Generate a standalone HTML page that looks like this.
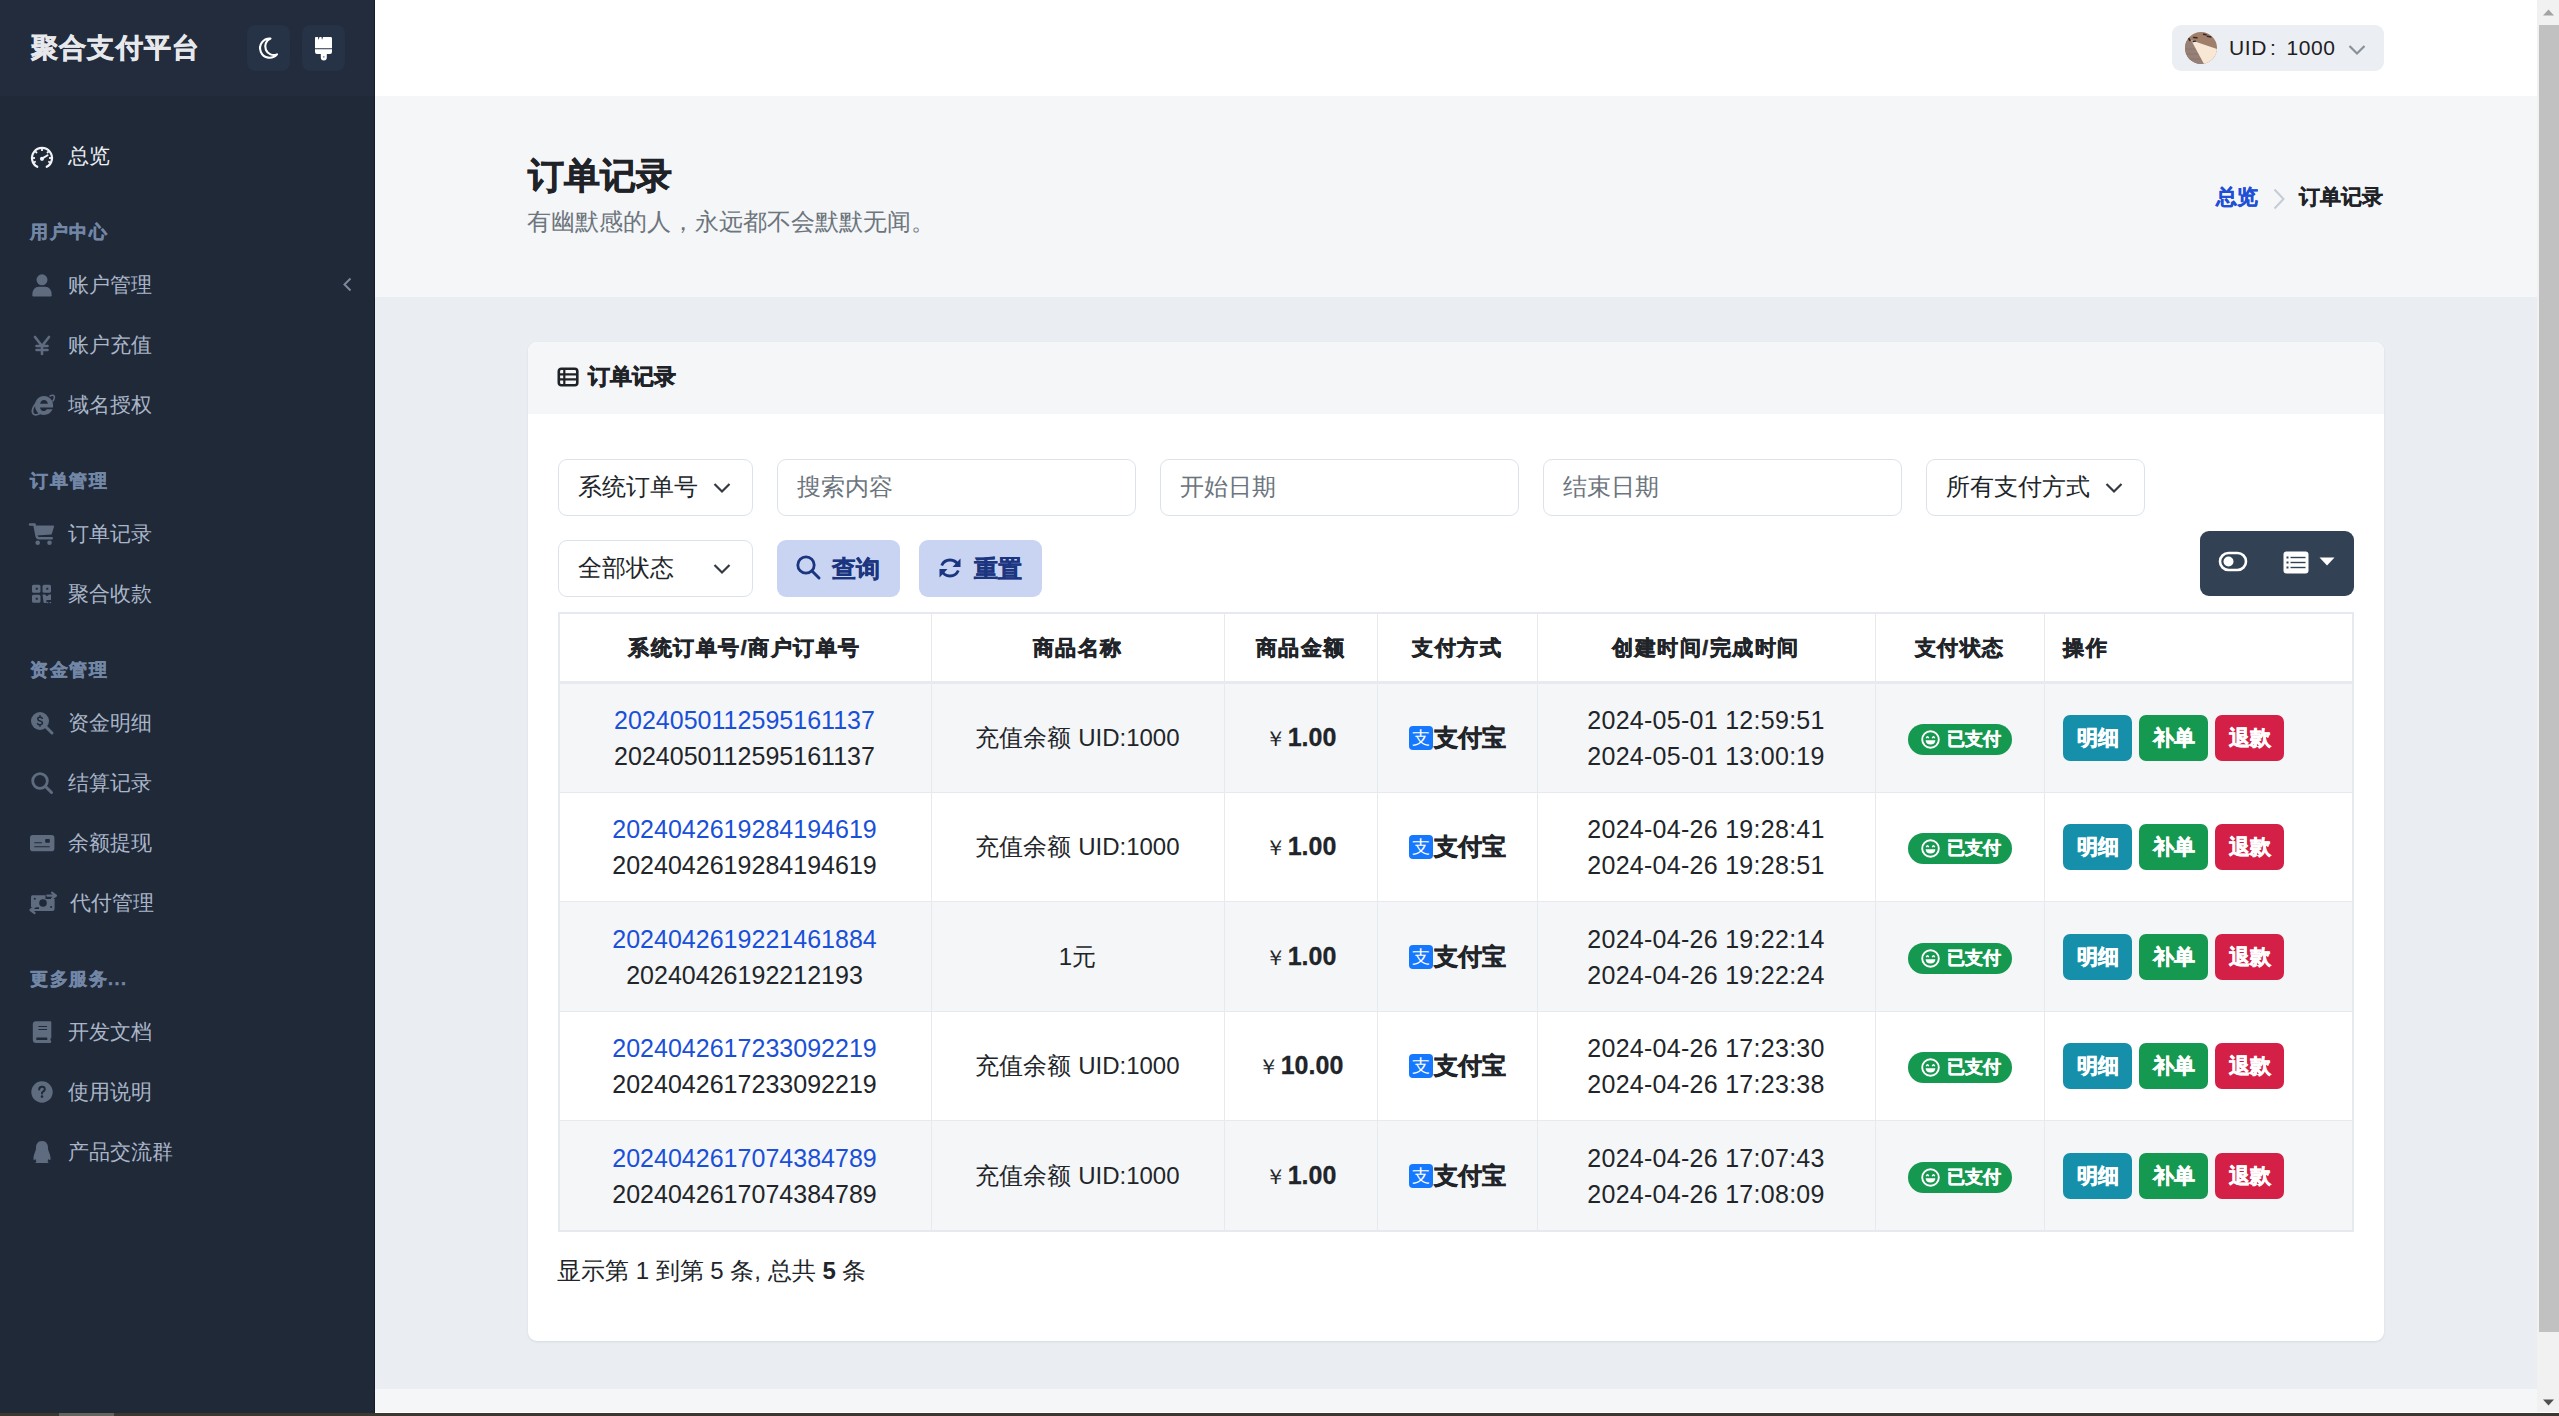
<!DOCTYPE html>
<html><head><meta charset="utf-8">
<style>
*{box-sizing:border-box;margin:0;padding:0}
html,body{width:2559px;height:1416px;overflow:hidden}
body{font-family:"Liberation Sans",sans-serif;color:#212529;background:#eaedf1;position:relative;font-size:24px}
.abs{position:absolute}
svg.abs{overflow:visible}
.b{-webkit-text-stroke:0.5px currentColor}
/* sidebar */
#sb{left:0;top:0;width:375px;height:1413px;background:#1f2938}
#sbh{left:0;top:0;width:375px;height:96px;background:#222c3d}
#sbedge{left:374px;top:0;width:1px;height:1413px;background:#151c28}
.brand{left:31px;top:28px;font-size:27px;font-weight:bold;color:#e6e8ec;letter-spacing:1.2px;line-height:40px;-webkit-text-stroke:0.6px #e6e8ec}
.hbtn{top:25px;width:43px;height:46px;border-radius:8px;background:#263245}
.nav{left:0;top:126px;width:375px}
.ni{height:60px;display:flex;align-items:center;padding-left:68px;color:#aab5c8;font-size:21px;position:relative;line-height:30px}
.ni.act{color:#eef0f3}
.nh{padding:33px 30px 9px;height:69px;line-height:27px;font-size:18px;font-weight:bold;letter-spacing:1.5px;color:#7286a5;-webkit-text-stroke:0.4px #7286a5}
.ico{fill:#5f6b7f}
/* header */
#hdr{left:375px;top:0;width:2162px;height:96px;background:#fff}
#hero{left:375px;top:96px;width:2162px;height:201px;background:#f5f6f8}
#foot{left:375px;top:1389px;width:2162px;height:23px;background:#f5f6f8}
#wl{left:375px;top:1412px;width:2184px;height:1px;background:#fff}
#task{left:0;top:1413px;width:2559px;height:3px;background:#3c3830}
#thumbh{left:59px;top:1413px;width:55px;height:3px;background:#66635c}
#scr{left:2537px;top:0;width:22px;height:1412px;background:#f1f1f1}
#scrth{left:2539px;top:25px;width:20px;height:1307px;background:#c1c1c1}
#card{left:528px;top:342px;width:1856px;height:999px;background:#fff;border-radius:9px;box-shadow:0 1px 2px rgba(200,206,215,.6)}
#cardh{left:528px;top:342px;width:1856px;height:72px;background:#f5f6f8;border-radius:9px 9px 0 0}
.inp{height:57px;border:1.5px solid #dde2ea;border-radius:9px;background:#fff;font-size:24px;line-height:54px;padding-left:19px;color:#212529}
.ph{color:#6c757d}
.btnq{top:540px;height:57px;border-radius:9px;background:#c8d4f2;color:#1b3580;font-size:24px;font-weight:bold;line-height:57px;-webkit-text-stroke:0.4px #1b3580}
.tl{background:#e6e9ee}
.cell{display:flex;flex-direction:column;align-items:center;justify-content:center;text-align:center;font-size:24px;line-height:36px;color:#212529}
.th{font-size:21px;font-weight:bold;letter-spacing:1.5px;color:#212529;-webkit-text-stroke:0.6px #212529;line-height:30px}
.lnk{color:#1a50d8}
.amt{font-weight:bold}
.badge{height:31px;border-radius:16px;background:#15984f;color:#fff;font-size:18px;font-weight:bold;line-height:31px;-webkit-text-stroke:0.5px #fff}
.ab{width:69px;height:46px;border-radius:7px;color:#fff;font-size:21px;font-weight:bold;line-height:46px;text-align:center;-webkit-text-stroke:0.6px #fff}
.num{font-size:25px;letter-spacing:0.02px}
.dt{font-size:25px;letter-spacing:0.28px}
.amtw{display:flex;align-items:baseline}
.yen{font-size:21px;margin-right:2px}
.amt{font-weight:bold;font-size:25px;-webkit-text-stroke:0.3px #212529}
.ali{font-weight:bold;-webkit-text-stroke:0.6px #212529}
</style></head>
<body>
<div id="sb" class="abs"></div>
<div id="sbh" class="abs"></div>
<div id="sbedge" class="abs"></div>
<div class="abs brand">聚合支付平台</div>
<div class="abs hbtn" style="left:247px"></div>
<div class="abs hbtn" style="left:302px"></div>
<!-- moon -->
<svg class="abs" style="left:259px;top:38px" width="19" height="20" viewBox="0 0 19 20"><path d="M11.5 0.6 A9.6 9.6 0 1 0 18 16.4 A7.6 7.6 0 0 1 11.5 0.6 Z" fill="none" stroke="#fff" stroke-width="2.1" stroke-linejoin="round"/></svg>
<!-- brush -->
<svg class="abs" style="left:314px;top:37px" width="19" height="23" viewBox="0 0 19 23"><path d="M1.5 0 L4 0 L4.5 3 L5.5 0 L7.5 0 L8 3 L9 0 L17 0 Q18 0 18 1.5 L18 11.3 L1 11.3 L1 1.5 Q1 0 1.5 0 Z" fill="#fff"/><path d="M1 12.2 L18 12.2 L18 15 Q18 17 16 17 L12.8 17 L12.8 20.5 A3 3 0 0 1 6.8 20.5 L6.8 17 L3 17 Q1 17 1 15 Z" fill="#fff"/><circle cx="9.8" cy="19.8" r="0.9" fill="#8a93a3"/></svg>

<div class="abs nav">
 <div class="ni act">总览</div>
 <div class="nh">用户中心</div>
 <div class="ni">账户管理</div>
 <div class="ni">账户充值</div>
 <div class="ni">域名授权</div>
 <div class="nh">订单管理</div>
 <div class="ni">订单记录</div>
 <div class="ni">聚合收款</div>
 <div class="nh">资金管理</div>
 <div class="ni">资金明细</div>
 <div class="ni">结算记录</div>
 <div class="ni">余额提现</div>
 <div class="ni" style="padding-left:70px">代付管理</div>
 <div class="nh">更多服务...</div>
 <div class="ni">开发文档</div>
 <div class="ni">使用说明</div>
 <div class="ni">产品交流群</div>
</div>
<!-- gauge -->
<svg class="abs" style="left:30px;top:146px" width="24" height="24" viewBox="0 0 24 24">
 <path d="M7.3 20.8 A10 10 0 1 1 16.7 20.8" fill="none" stroke="#f2f4f7" stroke-width="2.2" stroke-linecap="round"/>
 <g stroke="#f2f4f7" stroke-width="1.8" stroke-linecap="butt">
  <line x1="12" y1="2.5" x2="12" y2="5"/><line x1="5.3" y1="5.3" x2="7" y2="7"/><line x1="18.7" y1="5.3" x2="17" y2="7"/>
  <line x1="2.5" y1="12" x2="5" y2="12"/><line x1="21.5" y1="12" x2="19" y2="12"/>
  <line x1="3.6" y1="16.5" x2="5.8" y2="15.5"/><line x1="20.4" y1="16.5" x2="18.2" y2="15.5"/>
 </g>
 <line x1="12" y1="12.6" x2="17.6" y2="9.2" stroke="#f2f4f7" stroke-width="1.9" stroke-linecap="round"/>
 <circle cx="12" cy="12.8" r="2.1" fill="#f2f4f7"/>
</svg>
<!-- user -->
<svg class="abs ico" style="left:30px;top:273px" width="24" height="24" viewBox="0 0 24 24"><circle cx="12" cy="6.8" r="5.5"/><path d="M2.3 22.5 Q2.3 13.8 9 13.8 L15 13.8 Q21.7 13.8 21.7 22.5 Q21.7 23.5 20.7 23.5 L3.3 23.5 Q2.3 23.5 2.3 22.5Z"/></svg>
<!-- chevron left -->
<svg class="abs" style="left:342px;top:277px" width="11" height="15" viewBox="0 0 11 15"><path d="M8.5 1.5 L2.5 7.5 L8.5 13.5" fill="none" stroke="#7d889b" stroke-width="2"/></svg>
<!-- yen -->
<svg class="abs" style="left:30px;top:333px" width="24" height="24" viewBox="0 0 24 24"><path d="M5 4 L12 13 L19 4 M12 13 L12 21 M6.5 13 L17.5 13 M6.5 17 L17.5 17" fill="none" stroke="#5f6b7f" stroke-width="2.6" stroke-linecap="round" stroke-linejoin="round"/></svg>
<!-- IE -->
<svg class="abs ico" style="left:30px;top:393px" width="24" height="24" viewBox="0 0 24 24">
 <path d="M14 3 C8.5 3 5 7.3 5 12.5 C5 17.8 8.7 22 14 22 C17.8 22 21 19.8 22.5 16.3 L16.8 16.3 C16.1 17.4 15.1 18.1 14 18.1 C11.9 18.1 10.3 16.6 10 14.4 L23 14.4 C23.1 13.8 23.1 13.2 23.1 12.5 C23.1 7.3 19.5 3 14 3 Z M10.1 10.8 C10.5 8.6 12 7.1 14 7.1 C16 7.1 17.5 8.6 17.9 10.8 Z"/>
 <path d="M19.5 3.4 C21.8 1.8 23.8 1.9 24.3 3.2 C24.8 4.6 24 6.5 22.6 8.5" fill="none" stroke="#5f6b7f" stroke-width="1.5"/>
 <path d="M7 9 C3.5 13 1.8 17 2.6 19.8 C3.3 22.2 6.3 22.5 10 20.5" fill="none" stroke="#5f6b7f" stroke-width="1.8"/>
</svg>
<!-- cart -->
<svg class="abs ico" style="left:29px;top:522px" width="26" height="24" viewBox="0 0 26 24">
 <path d="M1 2.5 L5.5 2.5" stroke="#5f6b7f" stroke-width="2.4" stroke-linecap="round"/>
 <path d="M5.5 3.5 L24.5 3.5 Q25.3 3.8 25 4.8 L22.6 12.4 L7.2 13.5 Z"/>
 <path d="M5.5 3 L7.6 14 Q8.2 16.3 10 16.3 L22.7 16.3" fill="none" stroke="#5f6b7f" stroke-width="2.5" stroke-linecap="round"/>
 <circle cx="8.7" cy="20.7" r="2.3"/><circle cx="20.5" cy="20.7" r="2.3"/>
</svg>
<!-- qrcode -->
<svg class="abs ico" style="left:32px;top:584px" width="20" height="20" viewBox="0 0 20 20">
 <path fill-rule="evenodd" d="M1.5 0.8 h5.5 q1.5 0 1.5 1.5 v5 q0 1.5 -1.5 1.5 h-5.5 q-1.5 0 -1.5 -1.5 v-5 q0 -1.5 1.5 -1.5 Z M3.8 3.8 v2 h2 v-2 Z"/>
 <path fill-rule="evenodd" d="M12 0.8 h5.5 q1.5 0 1.5 1.5 v5 q0 1.5 -1.5 1.5 h-5.5 q-1.5 0 -1.5 -1.5 v-5 q0 -1.5 1.5 -1.5 Z M14.3 3.8 v2 h2 v-2 Z"/>
 <path fill-rule="evenodd" d="M1.5 10.8 h5.5 q1.5 0 1.5 1.5 v5 q0 1.5 -1.5 1.5 h-5.5 q-1.5 0 -1.5 -1.5 v-5 q0 -1.5 1.5 -1.5 Z M3.8 13.8 v2 h2 v-2 Z"/>
 <path d="M10.5 10.5 h2.5 l2 1.8 l2 -1.8 h2 v5.5 h-4.5 v3 h-2 q-1 0 -1 -1 Z"/><rect x="14.8" y="18" width="1.5" height="1.2"/><rect x="17.6" y="18" width="1.5" height="1.2"/>
</svg>
<!-- search dollar -->
<svg class="abs ico" style="left:30px;top:711px" width="24" height="24" viewBox="0 0 24 24">
 <circle cx="10" cy="10" r="9"/><path d="M16 16 L22 22" stroke="#5f6b7f" stroke-width="3" stroke-linecap="round"/>
 <path d="M12.3 7.3 Q11.8 6.3 10 6.3 Q7.8 6.3 7.8 8 Q7.8 9.5 10 9.9 Q12.4 10.4 12.4 12 Q12.4 13.7 10 13.7 Q8 13.7 7.5 12.6 M10 4.8 V6.3 M10 13.7 V15.2" fill="none" stroke="#1f2938" stroke-width="1.5" stroke-linecap="round"/>
</svg>
<!-- search -->
<svg class="abs" style="left:30px;top:771px" width="24" height="24" viewBox="0 0 24 24">
 <circle cx="10" cy="10" r="7.3" fill="none" stroke="#5f6b7f" stroke-width="2.8"/><path d="M15.5 15.5 L21.5 21.5" stroke="#5f6b7f" stroke-width="3" stroke-linecap="round"/>
</svg>
<!-- money check -->
<svg class="abs ico" style="left:29px;top:834px" width="26" height="18" viewBox="0 0 26 18">
 <rect x="1" y="1" width="24.4" height="16.2" rx="2.8"/>
 <g fill="#1f2938"><rect x="5.2" y="8.2" width="7.8" height="1.1" rx=".5"/><rect x="5.2" y="12.2" width="15.6" height="1.1" rx=".5"/><rect x="16.2" y="5" width="4.6" height="3.8" rx=".8"/></g>
</svg>
<!-- money bill transfer -->
<svg class="abs ico" style="left:29px;top:891px" width="29" height="24" viewBox="0 0 29 24">
 <path d="M3.5 4.3 L17 4.3 L17 8 L25.6 8 L25.6 17.8 Q25.6 20 23.5 20 L10 20 L10 16.3 L2 16.3 L2 6 Q2 4.3 3.5 4.3 Z"/>
 <path d="M18 4.6 L26 4.6 M23 1.6 L27 4.6 L23 7.6" fill="none" stroke="#5f6b7f" stroke-width="2.2" stroke-linecap="round" stroke-linejoin="round"/>
 <path d="M11 19 L2.5 19 M5.5 16 L1.5 19 L5.5 22" fill="none" stroke="#5f6b7f" stroke-width="2.2" stroke-linecap="round" stroke-linejoin="round"/>
 <circle cx="14" cy="12" r="3.8" fill="#1f2938"/><circle cx="5.8" cy="7.8" r="1" fill="#1f2938"/><circle cx="22.1" cy="16" r="1" fill="#1f2938"/>
 <path d="M17 4.3 L17 8" stroke="#1f2938" stroke-width="1"/>
</svg>
<!-- book -->
<svg class="abs ico" style="left:32px;top:1020px" width="20" height="24" viewBox="0 0 20 24">
 <path d="M4 1.2 L18.5 1.2 Q19.3 1.2 19.3 2 L19.3 18 Q18.4 18.2 18.4 19.4 Q18.4 20.6 19.3 21 Q19.3 23 18.3 23 L4 23 Q0.8 23 0.8 19.8 L0.8 4.4 Q0.8 1.2 4 1.2 Z"/>
 <g fill="#1f2938"><rect x="6.3" y="6" width="8.8" height="1.1" rx=".5"/><rect x="6.3" y="9" width="8.8" height="1.1" rx=".5"/><rect x="4.3" y="17.6" width="11" height="2.4" rx=".5"/></g>
</svg>
<!-- question -->
<svg class="abs ico" style="left:30px;top:1080px" width="24" height="24" viewBox="0 0 24 24">
 <circle cx="12" cy="12" r="10.7"/>
 <path d="M9.2 9.4 Q9.2 6.8 12 6.8 Q14.8 6.8 14.8 9.2 Q14.8 10.8 13 11.6 Q12 12.1 12 13.4" fill="none" stroke="#1f2938" stroke-width="2" stroke-linecap="round"/>
 <circle cx="12" cy="16.6" r="1.3" fill="#1f2938"/>
</svg>
<!-- qq -->
<svg class="abs ico" style="left:30px;top:1140px" width="24" height="24" viewBox="0 0 24 24">
 <path d="M12 1 C7.5 1 6 4.5 6 7.5 C6 9 5.8 10 5.3 11.3 C4.3 13.8 3.2 16.6 3.5 19.5 C3.7 20.5 4.6 20 5.4 19 C5.7 20.3 6.2 21 6.5 21.4 C5.2 22 5.2 23 6.5 23 L17.5 23 C18.8 23 18.8 22 17.5 21.4 C17.8 21 18.3 20.3 18.6 19 C19.4 20 20.3 20.5 20.5 19.5 C20.8 16.6 19.7 13.8 18.7 11.3 C18.2 10 18 9 18 7.5 C18 4.5 16.5 1 12 1 Z"/>
</svg>
<div id="hdr" class="abs"></div>
<div id="hero" class="abs"></div>
<div id="foot" class="abs"></div>
<!-- user dropdown -->
<div class="abs" style="left:2172px;top:25px;width:212px;height:46px;border-radius:9px;background:#ebeef2"></div>
<svg class="abs" style="left:2185px;top:32px" width="32" height="32" viewBox="0 0 32 32">
 <defs><clipPath id="av"><circle cx="16" cy="16" r="16"/></clipPath></defs>
 <g clip-path="url(#av)">
  <rect width="32" height="32" fill="#9f7e6a"/>
  <path d="M0 7 L6.2 8.3 L19 32 L0 32 Z" fill="#958078"/>
  <path d="M0 17 L11 17 M0 22 L13.5 22 M0 27 L16.5 27" stroke="#8a7068" stroke-width="0.8"/>
  <path d="M6.2 8.3 L32 16.9 L32 32 L19 32 Z" fill="#f8e7d5"/>
  <path d="M18.5 2.2 L21 2.8 M22.3 4.2 L25.8 5 M3.5 6 L5 8.5 M8.6 5.4 L12 5.8" stroke="#3a2620" stroke-width="1.5" stroke-linecap="round"/>
  <path d="M8 9.6 L10.5 9.2" stroke="#2a2a35" stroke-width="1.3" stroke-linecap="round"/>
 </g>
</svg>
<div class="abs" style="left:2229px;top:33px;font-size:21px;line-height:30px;color:#1d2024;letter-spacing:0.6px">UID<span style="margin-left:3px;margin-right:10px">:</span>1000</div>
<svg class="abs" style="left:2348px;top:44px" width="18" height="12" viewBox="0 0 18 12"><path d="M1.5 2 L9 9.5 L16.5 2" fill="none" stroke="#8a9099" stroke-width="2.2"/></svg>

<!-- hero -->
<div class="abs b" style="left:528px;top:152px;font-size:36px;font-weight:bold;line-height:48px;color:#1f2328;-webkit-text-stroke:0.7px #1f2328">订单记录</div>
<div class="abs" style="left:527px;top:204px;font-size:24px;line-height:36px;color:#6d757d">有幽默感的人，永远都不会默默无闻。</div>
<div class="abs" style="left:2216px;top:182px;font-size:21px;line-height:30px;color:#1f4fd6;font-weight:bold;-webkit-text-stroke:0.3px #1f4fd6">总览</div>
<svg class="abs" style="left:2271px;top:187px" width="17" height="24" viewBox="0 0 17 24"><path d="M3.5 2.5 L12.5 12 L3.5 21.5" fill="none" stroke="#c4ccd6" stroke-width="2"/></svg>
<div class="abs" style="left:2299px;top:182px;font-size:21px;line-height:30px;color:#1f2328;font-weight:bold;-webkit-text-stroke:0.3px #1f2328">订单记录</div>

<!-- card -->
<div id="card" class="abs"></div>
<div id="cardh" class="abs"></div>
<svg class="abs" style="left:557px;top:367px" width="22" height="20" viewBox="0 0 22 20"><rect x="1.8" y="1.8" width="18.5" height="16.5" rx="2.5" fill="none" stroke="#1f2328" stroke-width="2.6"/><path d="M2 7.3 H20 M2 12.3 H20 M7.3 2 V18" stroke="#1f2328" stroke-width="2.2"/></svg>
<div class="abs" style="left:588px;top:362px;font-size:22px;line-height:30px;color:#1f2328;font-weight:bold;-webkit-text-stroke:0.6px #1f2328">订单记录</div>

<!-- filters row1 -->
<div class="abs inp" style="left:558px;top:459px;width:195px">系统订单号</div>
<svg class="abs" style="left:713px;top:482px" width="18" height="12" viewBox="0 0 18 12"><path d="M1.5 2 L9 9.5 L16.5 2" fill="none" stroke="#343a40" stroke-width="2.2"/></svg>
<div class="abs inp ph" style="left:777px;top:459px;width:359px">搜索内容</div>
<div class="abs inp ph" style="left:1160px;top:459px;width:359px">开始日期</div>
<div class="abs inp ph" style="left:1543px;top:459px;width:359px">结束日期</div>
<div class="abs inp" style="left:1926px;top:459px;width:219px">所有支付方式</div>
<svg class="abs" style="left:2105px;top:482px" width="18" height="12" viewBox="0 0 18 12"><path d="M1.5 2 L9 9.5 L16.5 2" fill="none" stroke="#343a40" stroke-width="2.2"/></svg>
<!-- row2 -->
<div class="abs inp" style="left:558px;top:540px;width:195px">全部状态</div>
<svg class="abs" style="left:713px;top:563px" width="18" height="12" viewBox="0 0 18 12"><path d="M1.5 2 L9 9.5 L16.5 2" fill="none" stroke="#343a40" stroke-width="2.2"/></svg>
<div class="abs btnq" style="left:777px;width:123px"><span class="abs" style="left:55px">查询</span></div>
<svg class="abs" style="left:796px;top:555px" width="26" height="26" viewBox="0 0 26 26"><circle cx="10" cy="10" r="8.2" fill="none" stroke="#1b3580" stroke-width="2.8"/><path d="M16 16 L23 23" stroke="#1b3580" stroke-width="3" stroke-linecap="round"/></svg>
<div class="abs btnq" style="left:919px;width:123px"><span class="abs" style="left:55px">重置</span></div>
<svg class="abs" style="left:938px;top:556px" width="24" height="24" viewBox="0 0 24 24">
 <path d="M20.3 9.5 A9 9 0 0 0 3.7 9.5" fill="none" stroke="#1b3580" stroke-width="2.8"/><path d="M22.5 2.5 L22.5 11 L14.5 11 Z" fill="#1b3580"/>
 <path d="M3.7 14.5 A9 9 0 0 0 20.3 14.5" fill="none" stroke="#1b3580" stroke-width="2.8"/><path d="M1.5 21.5 L1.5 13 L9.5 13 Z" fill="#1b3580"/>
</svg>
<!-- toolbar -->
<div class="abs" style="left:2200px;top:531px;width:154px;height:65px;border-radius:9px;background:#334155"></div>
<svg class="abs" style="left:2218px;top:551px" width="30" height="21" viewBox="0 0 30 21"><rect x="2" y="2" width="26" height="17" rx="8.5" fill="none" stroke="#fff" stroke-width="2.6"/><circle cx="10.5" cy="10.5" r="5" fill="#fff"/></svg>
<svg class="abs" style="left:2283px;top:551px" width="26" height="23" viewBox="0 0 26 23"><rect x="0.5" y="0.5" width="25" height="22" rx="3" fill="#fff"/><g fill="#334155"><rect x="3.5" y="5.5" width="2" height="2"/><rect x="3.5" y="10.5" width="2" height="2"/><rect x="3.5" y="15.5" width="2" height="2"/><rect x="7.5" y="5.8" width="15" height="1.4"/><rect x="7.5" y="10.8" width="15" height="1.4"/><rect x="7.5" y="15.8" width="15" height="1.4"/></g></svg>
<svg class="abs" style="left:2319px;top:557px" width="16" height="9" viewBox="0 0 16 9"><path d="M0.5 0.5 L15.5 0.5 L8 8.5 Z" fill="#fff"/></svg>
<div class="abs" style="left:558px;top:612px;width:1796px;height:620px;background:#fff"></div>
<div class="abs" style="left:560px;top:684px;width:1792px;height:108px;background:#f5f6f8"></div>
<div class="abs" style="left:560px;top:902px;width:1792px;height:109px;background:#f5f6f8"></div>
<div class="abs" style="left:560px;top:1121px;width:1792px;height:109px;background:#f5f6f8"></div>
<div class="abs tl" style="left:558px;top:612px;width:1796px;height:2px"></div>
<div class="abs tl" style="left:558px;top:681px;width:1796px;height:3px"></div>
<div class="abs tl" style="left:558px;top:792px;width:1796px;height:1px"></div>
<div class="abs tl" style="left:558px;top:901px;width:1796px;height:1px"></div>
<div class="abs tl" style="left:558px;top:1011px;width:1796px;height:1px"></div>
<div class="abs tl" style="left:558px;top:1120px;width:1796px;height:1px"></div>
<div class="abs tl" style="left:558px;top:1230px;width:1796px;height:2px"></div>
<div class="abs tl" style="left:558px;top:612px;width:2px;height:620px"></div>
<div class="abs tl" style="left:2352px;top:612px;width:2px;height:620px"></div>
<div class="abs tl" style="left:931px;top:612px;width:1px;height:620px"></div>
<div class="abs tl" style="left:1224px;top:612px;width:1px;height:620px"></div>
<div class="abs tl" style="left:1377px;top:612px;width:1px;height:620px"></div>
<div class="abs tl" style="left:1537px;top:612px;width:1px;height:620px"></div>
<div class="abs tl" style="left:1875px;top:612px;width:1px;height:620px"></div>
<div class="abs tl" style="left:2044px;top:612px;width:1px;height:620px"></div>
<div class="abs cell th" style="left:558px;top:614px;width:373px;height:67px">系统订单号/商户订单号</div>
<div class="abs cell th" style="left:931px;top:614px;width:293px;height:67px">商品名称</div>
<div class="abs cell th" style="left:1224px;top:614px;width:153px;height:67px">商品金额</div>
<div class="abs cell th" style="left:1377px;top:614px;width:160px;height:67px">支付方式</div>
<div class="abs cell th" style="left:1537px;top:614px;width:338px;height:67px">创建时间/完成时间</div>
<div class="abs cell th" style="left:1875px;top:614px;width:169px;height:67px">支付状态</div>
<div class="abs th" style="left:2063px;top:633px">操作</div>
<div class="abs cell" style="left:558px;top:684px;width:373px;height:108px;"><div class="lnk num">2024050112595161137</div><div class="num">2024050112595161137</div></div>
<div class="abs cell" style="left:931px;top:684px;width:293px;height:108px;"><div class="nm">充值余额 UID:1000</div></div>
<div class="abs cell" style="left:1224px;top:684px;width:153px;height:108px;"><div class="amtw"><span class="yen">￥</span><span class="amt">1.00</span></div></div>
<div class="abs cell" style="left:1377px;top:684px;width:160px;height:108px;"><div style="display:flex;align-items:center"><span style="display:inline-block;width:24px;height:24px;border-radius:4px;background:#1677ff;color:#fff;font-size:18px;line-height:24px;text-align:center;margin-right:1px;overflow:hidden">支</span><span class="ali">支付宝</span></div></div>
<div class="abs cell" style="left:1537px;top:684px;width:338px;height:108px;"><div class="dt">2024-05-01 12:59:51</div><div class="dt">2024-05-01 13:00:19</div></div>
<div class="abs cell" style="left:1875px;top:684px;width:169px;height:108px;"><div class="badge" style="margin-top:3px;display:flex;align-items:center;padding:0 11px 0 13px"><svg width="19" height="19" viewBox="0 0 19 19" style="margin-right:7px"><circle cx="9.5" cy="9.5" r="8.3" fill="none" stroke="#fff" stroke-width="1.9"/><path d="M4.6 10.3 H14.4 Q14 14.6 9.5 14.6 Q5 14.6 4.6 10.3 Z" fill="#fff"/><path d="M5.3 8.2 Q6.5 5.4 7.7 8.2 M11.3 8.2 Q12.5 5.4 13.7 8.2" fill="none" stroke="#fff" stroke-width="1.5"/></svg>已支付</div></div>
<div class="abs ab" style="left:2063px;top:715px;background:#1690aa">明细</div>
<div class="abs ab" style="left:2139px;top:715px;background:#15984f">补单</div>
<div class="abs ab" style="left:2215px;top:715px;background:#d41f47">退款</div>
<div class="abs cell" style="left:558px;top:793px;width:373px;height:108px;"><div class="lnk num">2024042619284194619</div><div class="num">2024042619284194619</div></div>
<div class="abs cell" style="left:931px;top:793px;width:293px;height:108px;"><div class="nm">充值余额 UID:1000</div></div>
<div class="abs cell" style="left:1224px;top:793px;width:153px;height:108px;"><div class="amtw"><span class="yen">￥</span><span class="amt">1.00</span></div></div>
<div class="abs cell" style="left:1377px;top:793px;width:160px;height:108px;"><div style="display:flex;align-items:center"><span style="display:inline-block;width:24px;height:24px;border-radius:4px;background:#1677ff;color:#fff;font-size:18px;line-height:24px;text-align:center;margin-right:1px;overflow:hidden">支</span><span class="ali">支付宝</span></div></div>
<div class="abs cell" style="left:1537px;top:793px;width:338px;height:108px;"><div class="dt">2024-04-26 19:28:41</div><div class="dt">2024-04-26 19:28:51</div></div>
<div class="abs cell" style="left:1875px;top:793px;width:169px;height:108px;"><div class="badge" style="margin-top:3px;display:flex;align-items:center;padding:0 11px 0 13px"><svg width="19" height="19" viewBox="0 0 19 19" style="margin-right:7px"><circle cx="9.5" cy="9.5" r="8.3" fill="none" stroke="#fff" stroke-width="1.9"/><path d="M4.6 10.3 H14.4 Q14 14.6 9.5 14.6 Q5 14.6 4.6 10.3 Z" fill="#fff"/><path d="M5.3 8.2 Q6.5 5.4 7.7 8.2 M11.3 8.2 Q12.5 5.4 13.7 8.2" fill="none" stroke="#fff" stroke-width="1.5"/></svg>已支付</div></div>
<div class="abs ab" style="left:2063px;top:824px;background:#1690aa">明细</div>
<div class="abs ab" style="left:2139px;top:824px;background:#15984f">补单</div>
<div class="abs ab" style="left:2215px;top:824px;background:#d41f47">退款</div>
<div class="abs cell" style="left:558px;top:902px;width:373px;height:109px;"><div class="lnk num">2024042619221461884</div><div class="num">20240426192212193</div></div>
<div class="abs cell" style="left:931px;top:902px;width:293px;height:109px;"><div class="nm">1元</div></div>
<div class="abs cell" style="left:1224px;top:902px;width:153px;height:109px;"><div class="amtw"><span class="yen">￥</span><span class="amt">1.00</span></div></div>
<div class="abs cell" style="left:1377px;top:902px;width:160px;height:109px;"><div style="display:flex;align-items:center"><span style="display:inline-block;width:24px;height:24px;border-radius:4px;background:#1677ff;color:#fff;font-size:18px;line-height:24px;text-align:center;margin-right:1px;overflow:hidden">支</span><span class="ali">支付宝</span></div></div>
<div class="abs cell" style="left:1537px;top:902px;width:338px;height:109px;"><div class="dt">2024-04-26 19:22:14</div><div class="dt">2024-04-26 19:22:24</div></div>
<div class="abs cell" style="left:1875px;top:902px;width:169px;height:109px;"><div class="badge" style="margin-top:3px;display:flex;align-items:center;padding:0 11px 0 13px"><svg width="19" height="19" viewBox="0 0 19 19" style="margin-right:7px"><circle cx="9.5" cy="9.5" r="8.3" fill="none" stroke="#fff" stroke-width="1.9"/><path d="M4.6 10.3 H14.4 Q14 14.6 9.5 14.6 Q5 14.6 4.6 10.3 Z" fill="#fff"/><path d="M5.3 8.2 Q6.5 5.4 7.7 8.2 M11.3 8.2 Q12.5 5.4 13.7 8.2" fill="none" stroke="#fff" stroke-width="1.5"/></svg>已支付</div></div>
<div class="abs ab" style="left:2063px;top:934px;background:#1690aa">明细</div>
<div class="abs ab" style="left:2139px;top:934px;background:#15984f">补单</div>
<div class="abs ab" style="left:2215px;top:934px;background:#d41f47">退款</div>
<div class="abs cell" style="left:558px;top:1012px;width:373px;height:108px;"><div class="lnk num">2024042617233092219</div><div class="num">2024042617233092219</div></div>
<div class="abs cell" style="left:931px;top:1012px;width:293px;height:108px;"><div class="nm">充值余额 UID:1000</div></div>
<div class="abs cell" style="left:1224px;top:1012px;width:153px;height:108px;"><div class="amtw"><span class="yen">￥</span><span class="amt">10.00</span></div></div>
<div class="abs cell" style="left:1377px;top:1012px;width:160px;height:108px;"><div style="display:flex;align-items:center"><span style="display:inline-block;width:24px;height:24px;border-radius:4px;background:#1677ff;color:#fff;font-size:18px;line-height:24px;text-align:center;margin-right:1px;overflow:hidden">支</span><span class="ali">支付宝</span></div></div>
<div class="abs cell" style="left:1537px;top:1012px;width:338px;height:108px;"><div class="dt">2024-04-26 17:23:30</div><div class="dt">2024-04-26 17:23:38</div></div>
<div class="abs cell" style="left:1875px;top:1012px;width:169px;height:108px;"><div class="badge" style="margin-top:3px;display:flex;align-items:center;padding:0 11px 0 13px"><svg width="19" height="19" viewBox="0 0 19 19" style="margin-right:7px"><circle cx="9.5" cy="9.5" r="8.3" fill="none" stroke="#fff" stroke-width="1.9"/><path d="M4.6 10.3 H14.4 Q14 14.6 9.5 14.6 Q5 14.6 4.6 10.3 Z" fill="#fff"/><path d="M5.3 8.2 Q6.5 5.4 7.7 8.2 M11.3 8.2 Q12.5 5.4 13.7 8.2" fill="none" stroke="#fff" stroke-width="1.5"/></svg>已支付</div></div>
<div class="abs ab" style="left:2063px;top:1043px;background:#1690aa">明细</div>
<div class="abs ab" style="left:2139px;top:1043px;background:#15984f">补单</div>
<div class="abs ab" style="left:2215px;top:1043px;background:#d41f47">退款</div>
<div class="abs cell" style="left:558px;top:1121px;width:373px;height:109px;"><div class="lnk num">2024042617074384789</div><div class="num">2024042617074384789</div></div>
<div class="abs cell" style="left:931px;top:1121px;width:293px;height:109px;"><div class="nm">充值余额 UID:1000</div></div>
<div class="abs cell" style="left:1224px;top:1121px;width:153px;height:109px;"><div class="amtw"><span class="yen">￥</span><span class="amt">1.00</span></div></div>
<div class="abs cell" style="left:1377px;top:1121px;width:160px;height:109px;"><div style="display:flex;align-items:center"><span style="display:inline-block;width:24px;height:24px;border-radius:4px;background:#1677ff;color:#fff;font-size:18px;line-height:24px;text-align:center;margin-right:1px;overflow:hidden">支</span><span class="ali">支付宝</span></div></div>
<div class="abs cell" style="left:1537px;top:1121px;width:338px;height:109px;"><div class="dt">2024-04-26 17:07:43</div><div class="dt">2024-04-26 17:08:09</div></div>
<div class="abs cell" style="left:1875px;top:1121px;width:169px;height:109px;"><div class="badge" style="margin-top:3px;display:flex;align-items:center;padding:0 11px 0 13px"><svg width="19" height="19" viewBox="0 0 19 19" style="margin-right:7px"><circle cx="9.5" cy="9.5" r="8.3" fill="none" stroke="#fff" stroke-width="1.9"/><path d="M4.6 10.3 H14.4 Q14 14.6 9.5 14.6 Q5 14.6 4.6 10.3 Z" fill="#fff"/><path d="M5.3 8.2 Q6.5 5.4 7.7 8.2 M11.3 8.2 Q12.5 5.4 13.7 8.2" fill="none" stroke="#fff" stroke-width="1.5"/></svg>已支付</div></div>
<div class="abs ab" style="left:2063px;top:1153px;background:#1690aa">明细</div>
<div class="abs ab" style="left:2139px;top:1153px;background:#15984f">补单</div>
<div class="abs ab" style="left:2215px;top:1153px;background:#d41f47">退款</div>
<div class="abs" style="left:557px;top:1253px;font-size:24px;line-height:36px;color:#212529">显示第 1 到第 5 条, 总共 <b>5</b> 条</div>
<div id="scr" class="abs"></div>
<div id="scrth" class="abs"></div>
<svg class="abs" style="left:2543px;top:9px" width="11" height="7" viewBox="0 0 11 7"><path d="M0 6.5 L5.5 0.5 L11 6.5Z" fill="#a3a3a3"/></svg>
<svg class="abs" style="left:2543px;top:1399px" width="11" height="7" viewBox="0 0 11 7"><path d="M0 0.5 L5.5 6.5 L11 0.5Z" fill="#505050"/></svg>
<div id="wl" class="abs"></div>
<div id="task" class="abs"></div>
<div id="thumbh" class="abs"></div>
</body></html>
